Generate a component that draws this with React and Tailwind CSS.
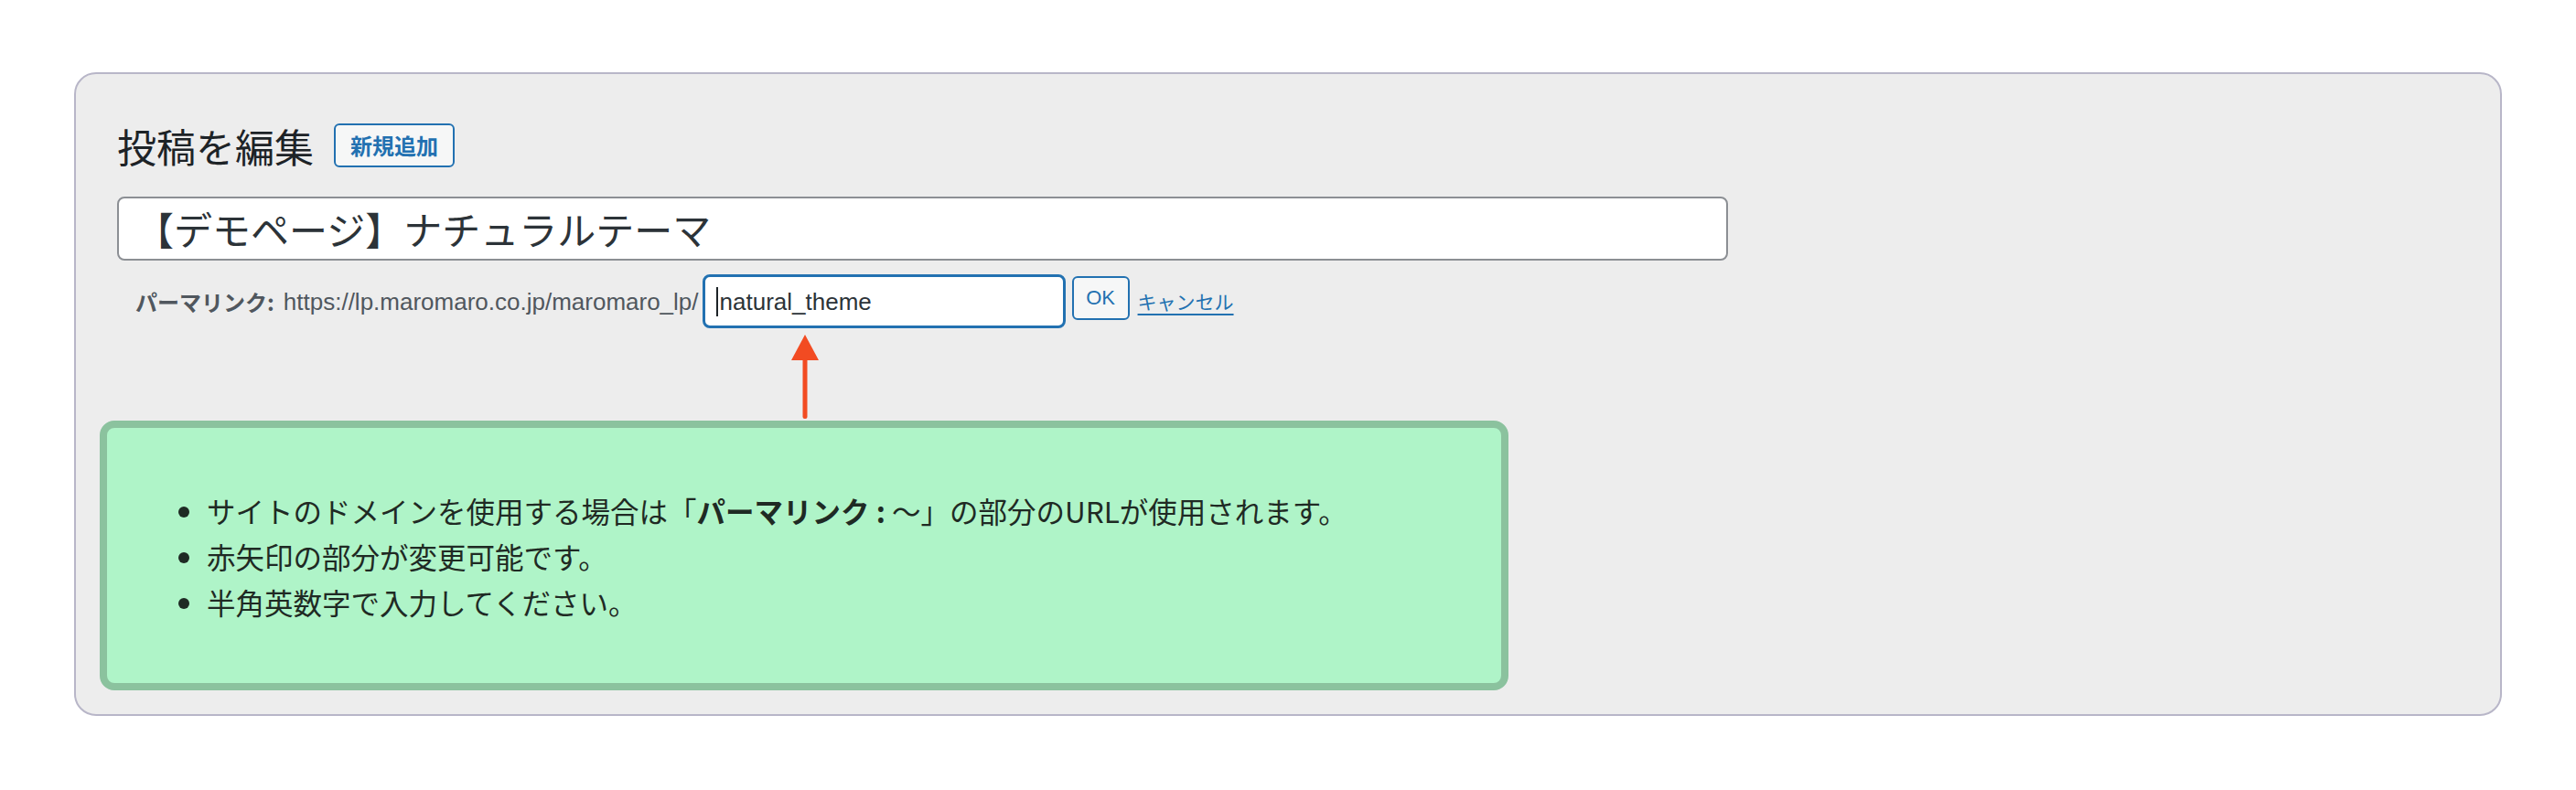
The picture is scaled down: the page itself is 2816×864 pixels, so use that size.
export default function App() {
  const jp = { fontFamily: '"Noto Sans CJK JP", "Noto Sans", sans-serif' }
  const latin = { fontFamily: '"Liberation Sans", "Noto Sans CJK JP", sans-serif' }

  return (
    <div className="w-[2816px] h-[864px] bg-white overflow-hidden pt-[79px] pl-[81px]">
      {/* Edit post panel */}
      <div className="w-[2654px] h-[704px] border-2 border-[#b8b6c8] rounded-[24px] bg-[#ededed] flex flex-col">

        {/* Heading */}
        <div className="mt-[54px] ml-[45px] flex items-center gap-[22px] h-[48px]">
          <h1 className="text-[43px] leading-none text-[#1d2327] font-normal" style={jp}>
            投稿を編集
          </h1>
          <span
            className="w-[132px] h-[48px] flex items-center justify-center border-2 border-[#2271b1] rounded-[6px] bg-[#f6f7f7] text-[#2271b1] text-[24px] font-bold leading-none"
            style={jp}
          >
            新規追加
          </span>
        </div>

        {/* Title field */}
        <div className="mt-[32px] ml-[45px] w-[1761px] h-[70px] bg-white border-2 border-[#8c8f94] rounded-[8px] flex items-center pl-[18px]">
          <span className="text-[42px] leading-none text-[#2c3338]" style={jp}>
            【デモページ】ナチュラルテーマ
          </span>
        </div>

        {/* Permalink row */}
        <div className="mt-[15px] ml-[65px] h-[59px] flex items-center text-[#50575e]">
          <span className="text-[24px] font-bold leading-none" style={jp}>パーマリンク:</span>
          <span className="ml-[10px] text-[26px] leading-none" style={latin}>
            https://lp.maromaro.co.jp/maromaro_lp/
          </span>
          <div className="ml-[4px] w-[397px] h-[59px] bg-white border-[3px] border-[#2271b1] rounded-[8px] flex items-center pl-[12px]">
            <span className="w-[2px] h-[32px] bg-[#1d2327]"></span>
            <span className="ml-[2px] text-[26px] leading-none text-[#2c3338]" style={latin}>natural_theme</span>
          </div>
          <span
            className="ml-[7px] mb-[8px] w-[63px] h-[48px] flex items-center justify-center border-2 border-[#2271b1] rounded-[6px] bg-[#f6f7f7] text-[#2271b1] text-[22px] leading-none"
            style={latin}
          >
            OK
          </span>
          <span className="ml-[9px] text-[21px] leading-none text-[#2271b1] underline underline-offset-[5px]" style={jp}>
            キャンセル
          </span>
        </div>

        {/* Red arrow */}
        <div className="mt-[7px] ml-[782px] w-[30px] h-[92px]">
          <svg width="30" height="92" viewBox="0 0 30 92">
            <polygon points="15,0 30,28 0,28" fill="#f24b22" />
            <rect x="12.5" y="26" width="5" height="66" rx="2.5" fill="#f24b22" />
          </svg>
        </div>

        {/* Note box */}
        <div className="mt-[2px] ml-[26px] w-[1540px] h-[295px] bg-[#aff4c8] border-[8px] border-[#8bc29e] rounded-[16px] flex items-center">
          <ul className="list-disc pl-[109px] text-[31.5px] leading-[50px] text-[#1f2a24]" style={jp}>
            <li>
              サイトのドメインを使用する場合は「<b className="font-bold">パーマリンク :</b> ～」の部分のURLが使用されます。
            </li>
            <li>赤矢印の部分が変更可能です。</li>
            <li>半角英数字で入力してください。</li>
          </ul>
        </div>
      </div>
    </div>
  )
}
